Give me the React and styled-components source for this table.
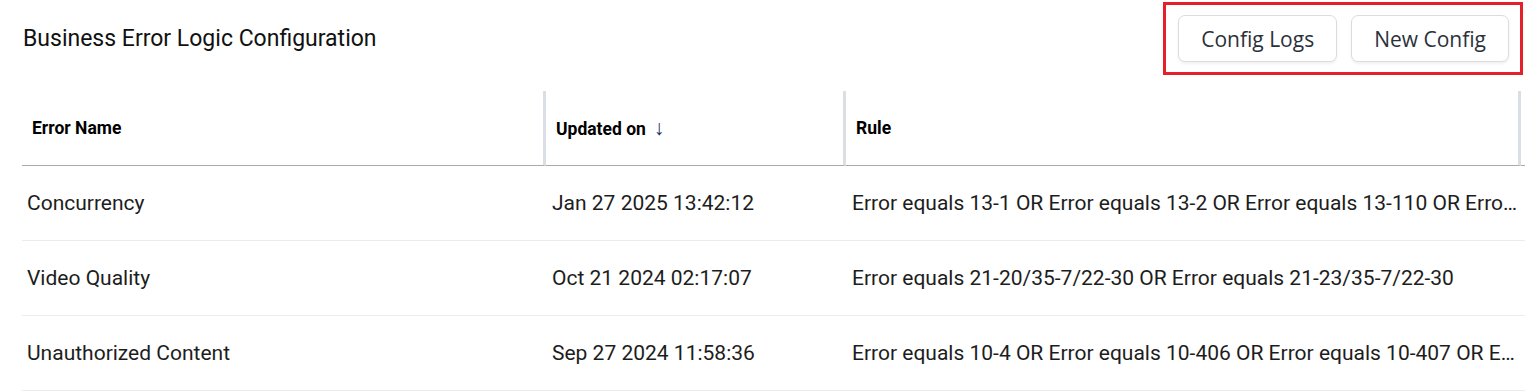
import React from "react";
import styled, { createGlobalStyle } from "styled-components";

const Global = createGlobalStyle`
  html, body { margin: 0; padding: 0; background: #fff; }
  body { font-family: Roboto, "Liberation Sans", sans-serif; color: #1d1d1d; overflow: hidden; }
`;

const Page = styled.div`
  width: 1525px;
  padding-left: 22px;
  box-sizing: border-box;
  overflow: hidden;
`;

const TopBar = styled.div`
  display: flex;
  align-items: center;
  justify-content: space-between;
  padding: 2px 2px 0 0;
  height: 73px;
  box-sizing: content-box;
`;

const Title = styled.h1`
  margin: 0 0 0 1px;
  font-family: Roboto, sans-serif;
  font-weight: 400;
  font-size: 23px;
  color: #111;
  letter-spacing: 0;
`;

const Actions = styled.div`
  display: flex;
  align-items: center;
  gap: 14px;
  height: 67px;
  padding: 0 11px 0 12px;
  border: 3px solid #e5202b;
`;

const Button = styled.button`
  height: 47px;
  padding: 0 22px;
  border: 1px solid #dcdcdc;
  border-radius: 7px;
  background: #fff;
  box-shadow: 0 2px 3px rgba(0, 0, 0, 0.06);
  font-family: "Open Sans", sans-serif;
  font-size: 21px;
  color: #2b313a;
  cursor: pointer;
  white-space: nowrap;
`;

const Table = styled.table`
  margin-top: 16px;
  border-collapse: separate;
  border-spacing: 0;
  table-layout: fixed;
  width: 1560px;
`;

const Th = styled.th`
  height: 75px;
  padding: 0 0 0 10px;
  text-align: left;
  font-family: Roboto, sans-serif;
  font-weight: 700;
  font-size: 17.5px;
  color: #000;
  border-bottom: 1px solid #a9a9a9;
  border-right: ${(p) => (p.$sep ? "3px solid #d9dfe5" : "none")};
  box-sizing: border-box;
`;

const SortArrow = styled.span`
  margin-left: 8px;
  color: #1b2a6b;
  font-weight: 400;
  font-size: 21px;
`;

const Td = styled.td`
  height: 75px;
  padding: 0 3px 0 ${(p) => p.$pl || 6}px;
  font-size: 21px;
  color: #1d1d1d;
  border-bottom: 1px solid #ececec;
  white-space: nowrap;
  overflow: hidden;
  text-overflow: ellipsis;
  box-sizing: border-box;
`;

const rows = [
  {
    name: "Concurrency",
    updated: "Jan 27 2025 13:42:12",
    rule: "Error equals 13-1 OR Error equals 13-2 OR Error equals 13-110 OR Error equals 13-111 OR Error equals 13-112",
  },
  {
    name: "Video Quality",
    updated: "Oct 21 2024 02:17:07",
    rule: "Error equals 21-20/35-7/22-30 OR Error equals 21-23/35-7/22-30",
  },
  {
    name: "Unauthorized Content",
    updated: "Sep 27 2024 11:58:36",
    rule: "Error equals 10-4 OR Error equals 10-406 OR Error equals 10-407 OR Error equals 10-408",
  },
];

export default function App() {
  return (
    <Page>
      <Global />
      <TopBar>
        <Title>Business Error Logic Configuration</Title>
        <Actions>
          <Button>Config Logs</Button>
          <Button>New Config</Button>
        </Actions>
      </TopBar>
      <Table>
        <colgroup>
          <col style={{ width: 524 }} />
          <col style={{ width: 300 }} />
          <col style={{ width: 675 }} />
          <col />
        </colgroup>
        <thead>
          <tr>
            <Th $sep>Error Name</Th>
            <Th $sep>
              Updated on<SortArrow>↓</SortArrow>
            </Th>
            <Th $sep>Rule</Th>
            <Th />
          </tr>
        </thead>
        <tbody>
          {rows.map((r) => (
            <tr key={r.name}>
              <Td $pl={5}>{r.name}</Td>
              <Td>{r.updated}</Td>
              <Td>{r.rule}</Td>
              <Td />
            </tr>
          ))}
        </tbody>
      </Table>
    </Page>
  );
}
